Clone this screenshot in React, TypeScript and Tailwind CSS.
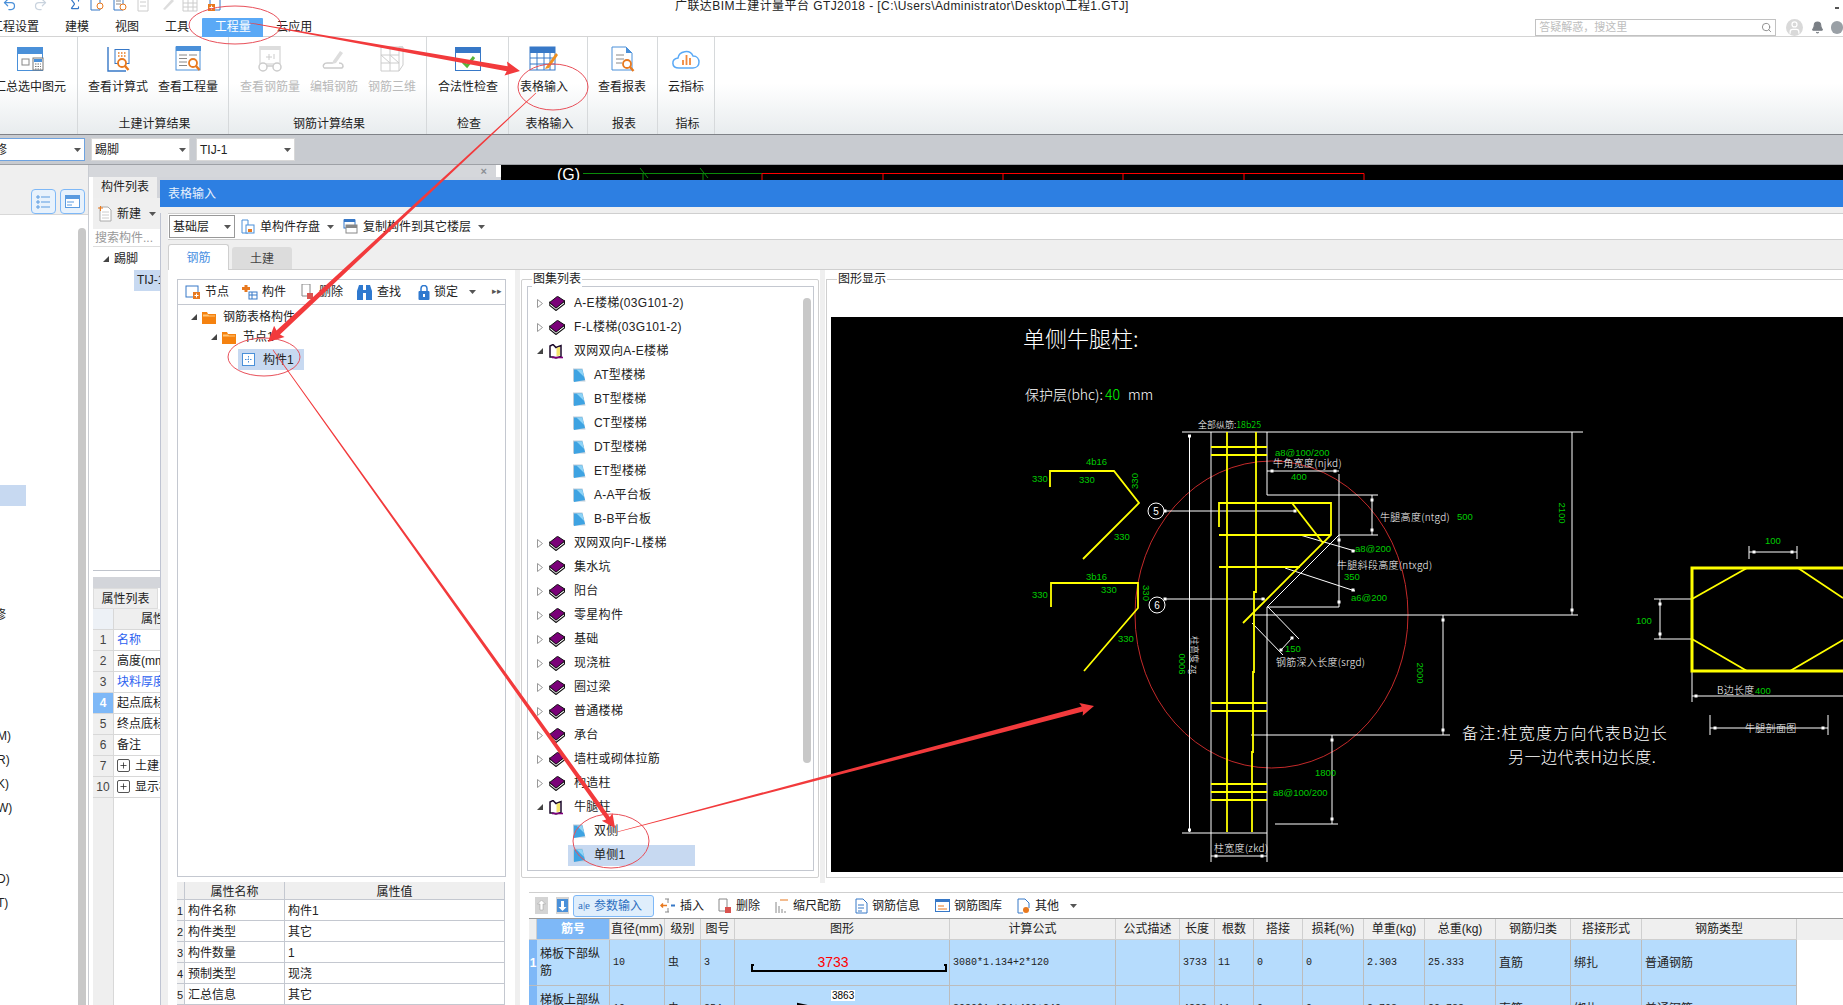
import type { ReactNode } from "react";
import { Undo2, Redo2, Sigma, Search, Bell, User, Plus } from "lucide-react";

const Caret = () => (
  <svg width="7" height="4" viewBox="0 0 7 4" className="shrink-0">
    <path d="M0 0h7L3.5 4z" fill="#555" />
  </svg>
);

const Book = () => (
  <svg width="16" height="15" viewBox="0 0 16 15" className="shrink-0">
    <path d="M.8 6.500v3l6.200 5 8.500-6.500V5L7 11.500z" fill="#fff" stroke="#111" strokeWidth="1.100" />
    <path d="M8.500.3L15.700 5 7 12.200.6 6.500z" fill="#7a0078" stroke="#111" strokeWidth="1" />
  </svg>
);

const OpenBook = () => (
  <svg width="15" height="15" viewBox="0 0 15 15" className="shrink-0">
    <path d="M1 13V2l3-1.500 3 3 5-2v11l-5 1.500-3-1z" fill="#fff" stroke="#1c0a2a" strokeWidth="1.500" />
    <path d="M7.500 4l3.500-1.200v8.500l-3.500 1.200z" fill="#f5e66a" />
    <path d="M3 13.500h11" stroke="#80007c" strokeWidth="1.600" />
  </svg>
);

const Page = () => (
  <svg width="13" height="15" viewBox="0 0 13 15" className="shrink-0">
    <path d="M0 .5h9.500l3 13H0z" fill="#bccbd9" />
    <path d="M1 1.500h8.200l2.800 10.500-11 2z" fill="#3ea3e2" />
    <path d="M3.500 1.500h5.700l2 7.500z" fill="#8ed3f6" />
  </svg>
);

const Folder = () => (
  <svg width="14" height="13" viewBox="0 0 14 13" className="shrink-0">
    <path d="M0 1h5l1 2h8v10H0z" fill="#f5820f" />
    <path d="M1 3.500h5l1 1h6v1H1z" fill="#ffc67a" />
  </svg>
);

const Closed = () => (
  <svg width="6" height="9" viewBox="0 0 6 9" className="shrink-0">
    <path d="M.5.5l5 4-5 4z" fill="#fff" stroke="#999" />
  </svg>
);

const Opened = () => (
  <svg width="6" height="6" viewBox="0 0 6 6" className="shrink-0">
    <path d="M6 0v6H0z" fill="#444" />
  </svg>
);

const Lens = ({ x = 20, y = 18 }: { x?: number; y?: number }) => (
  <g fill="none" stroke="#e8791f">
    <circle cx={x} cy={y} r="4" strokeWidth="1.800" fill="#fff" />
    <path d={`M${x + 3} ${y + 3}l3.500 4`} strokeWidth="2.400" />
  </g>
);

const Ico = ({ children }: { children: ReactNode }) => (
  <svg width="30" height="26" viewBox="0 0 30 26" className="shrink-0">
    {children}
  </svg>
);

const SumIcon = () => (
  <Ico>
    <rect x="2.500" y="1.500" width="25" height="23" fill="#fff" stroke="#4a90d9" />
    <rect x="2" y="1" width="26" height="7" fill="#4a90d9" />
    <rect x="7" y="13" width="7" height="6" fill="none" stroke="#888" />
    <rect x="18" y="12" width="10" height="12" fill="#fff" stroke="#777" />
    <rect x="19" y="13" width="8" height="3" fill="#4a90d9" />
    <path d="M20 18h6M20 20.500h6M20 23h6" stroke="#777" strokeDasharray="1.500 1" />
  </Ico>
);
const CalcIcon = () => (
  <Ico>
    <path d="M5 1v24h18" fill="none" stroke="#3778c7" strokeWidth="1.400" />
    <rect x="12" y="3.500" width="14" height="14" fill="#fff" stroke="#3778c7" />
    <path d="M15 7h1.500M18 7h1.500M21 7h1.500M15 10h1.500M18 10h1.500M21 10h1.500" stroke="#e8791f" strokeWidth="1.500" />
    <Lens x={19} y={17} />
  </Ico>
);
const QtyIcon = () => (
  <Ico>
    <rect x="3" y="1" width="24" height="23" fill="#fff" stroke="#4a90d9" />
    <rect x="3" y="0" width="25" height="5" fill="#4a90d9" />
    <path d="M6 9h8M16 9h8M6 12.500h8M6 16h8M6 19.500h8" stroke="#888" />
    <Lens x={20} y={17} />
  </Ico>
);
const GlassIcon = () => (
  <Ico>
    <rect x="5" y="0" width="20" height="18" fill="#fff" stroke="#ccc" />
    <rect x="5" y="0" width="20" height="4" fill="#ddd" />
    <path d="M14 8v6M11 11h6M19 8v5" stroke="#ccc" />
    <circle cx="8" cy="21" r="4" fill="#fff" stroke="#ccc" strokeWidth="1.500" />
    <circle cx="22" cy="21" r="4" fill="#fff" stroke="#ccc" strokeWidth="1.500" />
    <path d="M12 20h6" stroke="#ccc" strokeWidth="1.500" />
  </Ico>
);
const EditIcon = () => (
  <Ico>
    <path d="M5 22c-2-2 0-5 3-5h6M20 17c4 0 5 3 3 5H5" fill="none" stroke="#ccc" strokeWidth="1.500" />
    <path d="M14 15l7-10 3 2-7 10-4 1z" fill="#ddd" />
  </Ico>
);
const GridIcon = () => (
  <Ico>
    <path d="M4 1v24M13 1v24M22 1v24M4 1l22 0M4 9h18M4 17h18M4 25h18M22 1l4 0v18l-4 6M4 9l9 8M13 9l9 8" fill="none" stroke="#ccc" />
  </Ico>
);
const CheckIcon = () => (
  <Ico>
    <rect x="2.500" y="1.500" width="25" height="23" fill="#fff" stroke="#3778c7" />
    <rect x="2" y="1" width="26" height="6" fill="#3778c7" />
    <path d="M10 16l4 4 7-9" fill="none" stroke="#58b33c" strokeWidth="3" />
  </Ico>
);
const TableIcon = () => (
  <Ico>
    <rect x="1" y="1" width="25" height="23" fill="#fff" stroke="#3778c7" />
    <rect x="1" y="1" width="25" height="6" fill="#3778c7" />
    <path d="M1 12h25M1 18h25M8 7v17M15 7v17M21 7v17" stroke="#3778c7" />
    <path d="M17 21l10-14 2 2-9 13-4 1z" fill="#f09020" />
  </Ico>
);
const ReportIcon = () => (
  <Ico>
    <path d="M5 1h14l6 6v17H5z" fill="#fff" stroke="#4a90d9" />
    <path d="M19 1l6 6h-6z" fill="#4a90d9" />
    <path d="M9 9h8M9 13h8M9 17h6" stroke="#888" />
    <Lens x={20} y={18} />
  </Ico>
);
const CloudIcon = () => (
  <Ico>
    <path d="M8 22c-8 0-8-9-1-10 1-7 12-9 15-2 8 0 8 12 0 12z" fill="#fff" stroke="#5aa9f6" strokeWidth="1.500" />
    <path d="M12 19v-5M15.500 19V9M19 19v-7" stroke="#f0883c" strokeWidth="1.800" />
  </Ico>
);

function RibbonItem({ icon, label, dim }: { icon: ReactNode; label: string; dim?: boolean }) {
  return (
    <div className="flex flex-col items-center shrink-0">
      <div className="h-[26px]">{icon}</div>
      <div className={`mt-[7px] h-4 leading-4 whitespace-nowrap ${dim ? "text-[#b9b9b9]" : ""}`}>{label}</div>
    </div>
  );
}

function RibbonGroup({ className, items, label }: { className: string; items: ReactNode; label?: string }) {
  return (
    <div className={`flex flex-col h-full pt-[9px] overflow-hidden border-r border-[#d6d9db] ${className}`}>
      <div className="flex">{items}</div>
      <div className="mt-auto mb-[2px] pl-[3px] h-4 leading-4 text-center whitespace-nowrap">{label}</div>
    </div>
  );
}

function Combo({ className, text, textClass }: { className: string; text: string; textClass?: string }) {
  return (
    <div className={`flex items-center justify-between bg-white border h-[23px] pl-[3px] pr-[3px] overflow-hidden ${className}`}>
      <span className={`whitespace-nowrap ${textClass ?? ""}`}>{text}</span>
      <Caret />
    </div>
  );
}

const topMenus = [
  ["建模", "ml-[26px]"],
  ["视图", "ml-[26px]"],
  ["工具", "ml-[26px]"],
];

const sideProps: [string, string, string?][] = [
  ["1", "名称", "blue"],
  ["2", "高度(mm)"],
  ["3", "块料厚度(mm)", "blue"],
  ["4", "起点底标高(m)", "on"],
  ["5", "终点底标高(m)"],
  ["6", "备注"],
  ["7", "土建业务属性", "plus"],
  ["10", "显示样式", "plus"],
];

const atlas: [string, "c" | "o" | "p", boolean?][] = [
  ["A-E楼梯(03G101-2)", "c"],
  ["F-L楼梯(03G101-2)", "c"],
  ["双网双向A-E楼梯", "o"],
  ["AT型楼梯", "p"],
  ["BT型楼梯", "p"],
  ["CT型楼梯", "p"],
  ["DT型楼梯", "p"],
  ["ET型楼梯", "p"],
  ["A-A平台板", "p"],
  ["B-B平台板", "p"],
  ["双网双向F-L楼梯", "c"],
  ["集水坑", "c"],
  ["阳台", "c"],
  ["零星构件", "c"],
  ["基础", "c"],
  ["现浇桩", "c"],
  ["圈过梁", "c"],
  ["普通楼梯", "c"],
  ["承台", "c"],
  ["墙柱或砌体拉筋", "c"],
  ["构造柱", "c"],
  ["牛腿柱", "o"],
  ["双侧", "p"],
  ["单侧1", "p", true],
];

const nodeProps = [
  ["1", "构件名称", "构件1"],
  ["2", "构件类型", "其它"],
  ["3", "构件数量", "1"],
  ["4", "预制类型", "现浇"],
  ["5", "汇总信息", "其它"],
];

const rebarCols = "grid grid-cols-[8px_73px_55px_36px_34px_215px_166px_64px_35px_39px_49px_61px_61px_71px_75px_71px_155px]";
const rebarHead = ["", "筋号", "直径(mm)", "级别", "图号", "图形", "计算公式", "公式描述", "长度", "根数", "搭接", "损耗(%)", "单重(kg)", "总重(kg)", "钢筋归类", "搭接形式", "钢筋类型"];

const monoCell = "px-[3px] flex items-center border-r border-b border-[#bcbcbc] [font-family:'Liberation_Mono','Noto_Sans_CJK_SC',monospace] text-[10px]";
const textCell = "px-[3px] flex items-center border-r border-b border-[#bcbcbc]";

function RebarRow({ num, name, vals, fig, calc }: { num?: string; name: string; vals: string[]; fig: ReactNode; calc: string }) {
  return (
    <div className={`${rebarCols} h-[46px] w-[1268px] bg-[#b6dcfd]`}>
      <div className="flex items-center justify-center bg-[#7eb8f7] text-white font-bold border-b border-[#bcbcbc]">{num}</div>
      <div className={`${textCell} leading-[17px]`}>{name}</div>
      <div className={monoCell}>{vals[0]}</div>
      <div className={textCell + " text-[11px]"}>虫</div>
      <div className={monoCell}>{vals[1]}</div>
      <div className="border-r border-b border-[#bcbcbc] relative overflow-hidden">{fig}</div>
      <div className={monoCell}>{calc}</div>
      <div className={monoCell}></div>
      <div className={monoCell}>{vals[2]}</div>
      <div className={monoCell}>11</div>
      <div className={monoCell}>0</div>
      <div className={monoCell}>0</div>
      <div className={monoCell}>{vals[3]}</div>
      <div className={monoCell}>{vals[4]}</div>
      <div className={textCell}>直筋</div>
      <div className={textCell}>绑扎</div>
      <div className={textCell}>普通钢筋</div>
    </div>
  );
}

function PanelTool({ icon, label, caret }: { icon: ReactNode; label: string; caret?: boolean }) {
  return (
    <div className="flex items-center gap-[4px] shrink-0 whitespace-nowrap">
      {icon}
      <span>{label}</span>
      {caret && <div className="ml-[7px]"><Caret /></div>}
    </div>
  );
}

const W: [number, number, number, number][] = [
  [1182, 432, 1583, 432], [1189.5, 435, 1189.5, 832], [1211, 432, 1211, 862], [1267, 432, 1267, 495],
  [1267, 607, 1267, 862], [1267, 495, 1378, 495], [1339, 535, 1378, 535], [1339, 474, 1339, 607],
  [1267, 471, 1339, 471], [1267, 607, 1339, 607], [1267, 607, 1339, 535], [1253, 615, 1578, 615],
  [1572, 432, 1572, 615], [1443, 615, 1443, 735], [1251, 735, 1450, 735], [1332, 735, 1332, 824],
  [1275, 824, 1338, 824], [1182, 833, 1267, 833], [1211, 856, 1267, 856], [1372, 495, 1372, 535],
  [1165, 511, 1295, 511], [1165, 599, 1265, 599], [1300, 535, 1355, 551], [1285, 568, 1355, 591],
  [1268, 607, 1299, 639], [1252, 623, 1283, 655], [1292, 638, 1281, 650],
  [1749, 552, 1797, 552], [1749, 546, 1749, 559], [1797, 546, 1797, 559], [1660, 599, 1660, 639],
  [1654, 599, 1692, 599], [1654, 639, 1692, 639], [1692, 671, 1692, 702], [1692, 696, 1843, 696],
  [1710, 728, 1828, 728], [1710, 715, 1710, 735], [1828, 715, 1828, 735],
];

const Y: string[] = [
  "1050,487 1050,471 1114,471 1139,503 1083,559",
  "1051,607 1051,583 1138,583 1138,608 1084,671",
  "1227,432 1227,832",
  "1256,432 1256,592 1254,592 1254,672 1253,672 1253,752 1252,752 1252,832",
  "1211,447 1267,447", "1211,455 1267,455", "1211,703 1267,703", "1211,711 1267,711",
  "1211,784 1267,784", "1211,792 1267,792", "1211,800 1267,800",
  "1219,527 1219,503 1331,503 1331,535 1243,623", "1292,503 1323,543",
  "1219,535 1331,535", "1219,567 1300,567",
  "1747,568 1692,599", "1692,639 1747,671", "1798,568 1843,598", "1790,671 1843,640",
];

const marks: [number, number][] = [
  [1189.5, 436], [1189.5, 830], [1272, 471], [1335, 471], [1339, 540], [1339, 602], [1372, 500], [1372, 530],
  [1165, 511], [1295, 511], [1165, 599], [1263, 599], [1443, 620], [1443, 730], [1332, 740], [1332, 819],
  [1572, 610], [1216, 856], [1262, 856], [1754, 552], [1792, 552], [1660, 604], [1660, 634], [1696, 696],
  [1715, 728], [1823, 728], [1353, 551], [1353, 590], [1292, 638], [1281, 650],
];

const whiteLabels: [string, number, number][] = [
  ["牛角宽度(njkd)", 1273, 467],
  ["牛腿高度(ntgd)", 1380, 521],
  ["牛腿斜段高度(ntxgd)", 1337, 569],
  ["钢筋深入长度(srgd)", 1276, 666],
  ["柱宽度(zkd)", 1214, 852],
  ["B边长度", 1717, 694],
  ["牛腿剖面图", 1745, 732],
];

const greenLabels: [string, number, number][] = [
  ["4b16", 1086, 465], ["330", 1032, 482], ["330", 1079, 483], ["330", 1114, 540],
  ["3b16", 1086, 580], ["330", 1032, 598], ["330", 1101, 593], ["330", 1118, 642],
  ["a8@100/200", 1275, 456], ["400", 1291, 480], ["500", 1457, 520], ["a8@200", 1355, 552],
  ["350", 1344, 580], ["a6@200", 1351, 601], ["150", 1285, 652], ["1800", 1315, 776],
  ["a8@100/200", 1273, 796], ["100", 1765, 544], ["100", 1636, 624], ["400", 1755, 694],
];

const rotated: [string, number, number, number][] = [
  ["330", 1135, 481, -90], ["330", 1146, 593, 90], ["2100", 1562, 513, 90], ["2000", 1420, 673, 90], ["9000", 1182, 664, -90],
];

function CadDrawing() {
  return (
    <svg width="1012" height="555" viewBox="831 317 1012 555" className="block bg-black">
      <g fontFamily="'Noto Sans CJK SC',sans-serif" fill="#fff">
        <text x="1023" y="347" fontSize="22" fontWeight="300">单侧牛腿柱:</text>
        <text x="1025" y="400" fontSize="14" fontWeight="300">
          保护层(bhc):<tspan fill="#0f0" dx="2">40</tspan>
          <tspan dx="8">mm</tspan>
        </text>
        <text x="1462" y="739" fontSize="16" fontWeight="300" letterSpacing="1.200">备注:柱宽度方向代表B边长</text>
        <text x="1508" y="763" fontSize="16" fontWeight="300" letterSpacing="0.500">另一边代表H边长度.</text>
        <text x="1198" y="428" fontSize="9" fontWeight="300">全部纵筋:<tspan fill="#0f0">18b25</tspan></text>
        <text x="1187" y="620" fontSize="9" fontWeight="300" transform="rotate(90 1181 630)">柱高度 zg</text>
      </g>
      <ellipse cx="1271.500" cy="614.500" rx="136.500" ry="153.500" fill="none" stroke="#c42a2a" strokeWidth="1" />
      {W.map(([a, b, c, d], i) => (
        <line key={i} x1={a} y1={b} x2={c} y2={d} stroke="#fff" strokeWidth="1" />
      ))}
      {marks.map(([a, b], i) => (
        <rect key={i} x={a - 1.5} y={b - 1.5} width="3" height="3" fill="#fff" />
      ))}
      <g fill="none" stroke="#ff0" strokeWidth="1.800">
        {Y.map((p, i) => (
          <polyline key={i} points={p} />
        ))}
      </g>
      <rect x="1692" y="568" width="160" height="103" fill="none" stroke="#ff0" strokeWidth="3" />
      <g fill="#000" stroke="#fff">
        <circle cx="1156" cy="511" r="8" />
        <circle cx="1157" cy="605" r="8" />
      </g>
      <g fontFamily="'Liberation Sans',sans-serif" fontSize="10" fill="#fff" textAnchor="middle">
        <text x="1156" y="515">5</text>
        <text x="1157" y="609">6</text>
      </g>
      <g fontFamily="'Noto Sans CJK SC',sans-serif" fontSize="10" fontWeight="300" letterSpacing="0.300" fill="#fff">
        {whiteLabels.map(([t, x, y]) => (
          <text key={t} x={x} y={y}>{t}</text>
        ))}
      </g>
      <g fontFamily="'Liberation Sans',sans-serif" fontSize="9.500" fill="#0c0">
        {greenLabels.map(([t, x, y], i) => (
          <text key={i} x={x} y={y}>{t}</text>
        ))}
        {rotated.map(([t, x, y, r], i) => (
          <text key={i} x={x} y={y} textAnchor="middle" dominantBaseline="middle" transform={`rotate(${r} ${x} ${y})`}>{t}</text>
        ))}
      </g>
    </svg>
  );
}

function Taper({ x1, y1, x2, y2, w, head }: { x1: number; y1: number; x2: number; y2: number; w: number; head: number }) {
  const len = Math.hypot(x2 - x1, y2 - y1);
  const ux = (x2 - x1) / len;
  const uy = (y2 - y1) / len;
  const nx = -uy;
  const ny = ux;
  const bx = x2 - ux * head;
  const by = y2 - uy * head;
  const pts = [
    [x1 + nx * 0.3, y1 + ny * 0.3],
    [bx + nx * w, by + ny * w],
    [bx - ux * 1.5 + nx * head * 0.55, by - uy * 1.5 + ny * head * 0.55],
    [x2, y2],
    [bx - ux * 1.5 - nx * head * 0.55, by - uy * 1.5 - ny * head * 0.55],
    [bx - nx * w, by - ny * w],
    [x1 - nx * 0.3, y1 - ny * 0.3],
  ];
  return <polygon points={pts.map((p) => p.join(",")).join(" ")} fill="#f23a3c" />;
}

function Annotations() {
  return (
    <svg viewBox="0 0 1843 1005" className="absolute inset-0 w-[1843px] h-[1005px] pointer-events-none">
      <g fill="none" stroke="#e8505a" strokeWidth="1">
        <ellipse cx="235" cy="25" rx="46" ry="19" />
        <ellipse cx="553" cy="87" rx="35" ry="23" />
        <ellipse cx="264" cy="357" rx="36" ry="19" />
        <ellipse cx="611" cy="841" rx="38" ry="27" />
      </g>
      <Taper x1={250} y1={23} x2={520} y2={71} w={2.6} head={13} />
      <Taper x1={536} y1={93} x2={268} y2={342} w={2.6} head={14} />
      <Taper x1={273} y1={350} x2={615} y2={828} w={2.2} head={12} />
      <Taper x1={617} y1={832} x2={1094} y2={706} w={2.6} head={12} />
    </svg>
  );
}

export default function App() {
  return (
    <div className="relative flex flex-col w-[1843px] h-[1005px] overflow-hidden bg-white text-[12px] text-[#222] [font-family:'Liberation_Sans','Noto_Sans_CJK_SC',sans-serif]">
      {/* title bar */}
      <div className="flex h-[18px] shrink-0 overflow-hidden">
        <div className="flex items-start w-[675px] -mt-[3px] pl-[2px] shrink-0">
          <Undo2 size={15} className="text-[#4a90d9]" />
          <Redo2 size={15} className="text-[#c9d3de] ml-[16px]" />
          <Sigma size={14} className="text-[#3778c7] ml-[20px]" />
          <svg width="16" height="15" viewBox="0 0 16 15" className="ml-[7px]"><path d="M2 0h9v13H2z" fill="#fff" stroke="#3778c7" /><circle cx="11" cy="9" r="3" fill="#fff" stroke="#e8791f" /></svg>
          <svg width="16" height="15" viewBox="0 0 16 15" className="ml-[7px]"><path d="M2 0h9v13H2z" fill="#fff" stroke="#3778c7" /><path d="M4 4h5M4 7h5" stroke="#888" /><circle cx="11" cy="10" r="3" fill="#fff" stroke="#e8791f" /></svg>
          <svg width="16" height="15" viewBox="0 0 16 15" className="ml-[8px]"><path d="M2 0h10v14H2z" fill="#fff" stroke="#ccc" /><path d="M4 5h6M4 9h6" stroke="#ccc" /></svg>
          <svg width="14" height="15" viewBox="0 0 14 15" className="ml-[9px]"><path d="M2 12L11 2l2 2-9 9z" fill="#ddd" /></svg>
          <svg width="16" height="15" viewBox="0 0 16 15" className="ml-[7px]"><path d="M1 1h14v13H1zM1 6h14M1 10h14M6 1v13M11 1v13" fill="none" stroke="#ccc" /></svg>
          <svg width="16" height="15" viewBox="0 0 16 15" className="ml-[9px]"><path d="M3 0h10v13H3z" fill="#fff" stroke="#3778c7" /><rect x="1" y="7" width="7" height="7" fill="#e8791f" /><path d="M4.500 8.500v4M2.500 10.500h4" stroke="#fff" /></svg>
        </div>
        <div className="whitespace-nowrap leading-[13px] text-[12px] tracking-[0.42px]">广联达BIM土建计量平台 GTJ2018 - [C:\Users\Administrator\Desktop\工程1.GTJ]</div>
        <div className="ml-auto mr-[4px] mt-[7px] w-[4px] h-[2px] bg-[#555]" />
      </div>

      {/* menu row */}
      <div className="flex items-center h-[19px] shrink-0 border-b border-[#d4d4d4]">
        <span className="-ml-[9px] whitespace-nowrap">工程设置</span>
        {topMenus.map(([t, c]) => (
          <span key={t} className={`${c} whitespace-nowrap`}>{t}</span>
        ))}
        <div className="ml-[13px] w-[62px] h-[19px] leading-[18px] text-center bg-[#5aa9f6] text-white rounded-t-[1px]">工程量</div>
        <span className="ml-[13px] whitespace-nowrap">云应用</span>
        <div className="ml-[1223px] flex items-center justify-between w-[244px] h-[17px] border border-[#c2c2c2] px-[3px] text-[11px] text-[#bdbdbd]">
          <span>答疑解惑，搜这里</span>
          <Search size={11} className="text-[#888]" />
        </div>
        <div className="ml-[10px] w-[17px] h-[17px] rounded-full bg-[#d9d9d9] flex items-center justify-center overflow-hidden shrink-0">
          <User size={15} className="text-white" />
        </div>
        <Bell size={13} className="ml-[8px] shrink-0 text-[#7a7f85] fill-[#7a7f85]" />
        <div className="ml-[7px] w-[12px] h-[13px] rounded-full bg-[#9aa0a6] shrink-0" />
      </div>

      {/* ribbon */}
      <div className="flex h-[98px] shrink-0 border-b border-[#7f8287] bg-[linear-gradient(to_bottom,#fff_48%,#e8ecee_100%)]">
        <RibbonGroup className="w-[78px]" items={<div className="-ml-[6px] w-[72px]"><RibbonItem icon={<SumIcon />} label="汇总选中图元" /></div>} />
        <RibbonGroup className="w-[151px]" label="土建计算结果" items={<div className="flex gap-[10px] pl-[10px]"><RibbonItem icon={<CalcIcon />} label="查看计算式" /><RibbonItem icon={<QtyIcon />} label="查看工程量" /></div>} />
        <RibbonGroup className="w-[198px]" label="钢筋计算结果" items={<div className="flex gap-[10px] pl-[11px]"><RibbonItem dim icon={<GlassIcon />} label="查看钢筋量" /><RibbonItem dim icon={<EditIcon />} label="编辑钢筋" /><RibbonItem dim icon={<GridIcon />} label="钢筋三维" /></div>} />
        <RibbonGroup className="w-[82px]" label="检查" items={<div className="pl-[11px]"><RibbonItem icon={<CheckIcon />} label="合法性检查" /></div>} />
        <RibbonGroup className="w-[79px]" label="表格输入" items={<div className="pl-[11px]"><RibbonItem icon={<TableIcon />} label="表格输入" /></div>} />
        <RibbonGroup className="w-[70px]" label="报表" items={<div className="pl-[10px]"><RibbonItem icon={<ReportIcon />} label="查看报表" /></div>} />
        <RibbonGroup className="w-[57px]" label="指标" items={<div className="pl-[10px]"><RibbonItem icon={<CloudIcon />} label="云指标" /></div>} />
      </div>

      {/* selector bar */}
      <div className="flex items-center h-[30px] shrink-0 bg-[#c8cbd0] border-b border-[#9ea1a6]">
        <Combo className="w-[86px] -ml-[1px] border-[#6ea3e0]" text="修" textClass="-ml-[8px]" />
        <Combo className="w-[99px] ml-[6px] border-[#d8d8d8]" text="踢脚" />
        <Combo className="w-[99px] ml-[6px] border-[#d8d8d8]" text="TIJ-1" />
      </div>

      <div className="flex flex-1 min-h-0">
        {/* far left panel */}
        <div className="flex flex-col w-[89px] shrink-0 border-r border-[#c9ccd2]">
          <div className="flex gap-[4px] h-[50px] shrink-0 pt-[24px] pl-[31px] bg-[#efefef] border-b border-[#d8d8d8]">
            <div className="flex items-center justify-center w-[25px] h-[25px] rounded-[4px] border border-[#7eb8f7] bg-[#e8f2fc]">
              <svg width="15" height="15" viewBox="0 0 15 15"><path d="M1 2h2v2H1zM1 7h2v2H1zM1 12h2v2H1z" fill="none" stroke="#5a9be0" /><path d="M5 3h9M5 8h9M5 13h9" stroke="#5a9be0" /></svg>
            </div>
            <div className="flex items-center justify-center w-[25px] h-[25px] rounded-[4px] border border-[#7eb8f7] bg-[#e8f2fc]">
              <svg width="15" height="15" viewBox="0 0 15 15"><rect x=".5" y="1.500" width="14" height="12" fill="#fff" stroke="#5a9be0" /><rect x="0" y="1" width="15" height="4" fill="#5a9be0" /><path d="M2 8h7M2 11h5" stroke="#5a9be0" /></svg>
            </div>
          </div>
          <div className="flex flex-1 min-h-0">
            <div className="w-[78px] shrink-0 overflow-hidden">
              <div className="mt-[270px] w-[26px] h-[21px] bg-[#c7d9f1]" />
              <div className="mt-[101px] h-4 leading-4 -ml-[6px]">修</div>
              <div className="mt-[101px] h-6 leading-6 -ml-[3px]">M)</div>
              <div className="h-6 leading-6 -ml-[3px]">R)</div>
              <div className="h-6 leading-6 -ml-[3px]">K)</div>
              <div className="h-6 leading-6 -ml-[3px]">W)</div>
              <div className="mt-[47px] h-6 leading-6 -ml-[3px]">D)</div>
              <div className="h-6 leading-6 -ml-[3px]">T)</div>
            </div>
            <div className="mt-[13px] w-[8px] h-[900px] bg-[#c8c8c8] rounded-t" />
          </div>
        </div>

        {/* component and property lists, mostly behind the dialog */}
        <div className="flex flex-col w-[412px] shrink-0 pl-[4px]">
          <div className="flex items-center justify-end h-[12px] shrink-0 pr-[9px] bg-[#d5d7db] text-[#8b8e93] -ml-[4px] w-[407px] text-[11px] font-bold leading-none">×</div>
          <div className="flex h-[21px] shrink-0 bg-[#d3d5da]">
            <div className="w-[64px] bg-[#eee] text-center leading-[21px]">构件列表</div>
          </div>
          <div className="flex items-center h-[31px] shrink-0 bg-[#efefef] pl-[5px] gap-[5px]">
            <svg width="14" height="16" viewBox="0 0 14 16"><path d="M2 1h8l3 3v11H2z" fill="#fff" stroke="#aaa" /><path d="M4 6h7M4 9h7M4 12h7" stroke="#ccc" /><path d="M0 2h5M2.500 0v5" stroke="#e8791f" /></svg>
            <span>新建</span>
            <div className="ml-[3px]"><Caret /></div>
          </div>
          <div className="h-[18px] shrink-0 pl-[2px] text-[#999] leading-[18px] border-b border-[#ddd]">搜索构件...</div>
          <div className="flex items-center h-[22px] pl-[10px] gap-[5px] mt-[1px]">
            <Opened />
            <span>踢脚</span>
          </div>
          <div className="ml-[41px] h-[21px] leading-[21px] pl-[3px] bg-[#c7d9f1] w-[100px]">TIJ-1</div>
          <div className="h-[280px] shrink-0 border-b border-[#c0c4cc]" />
          <div className="h-[6px] shrink-0" />
          <div className="h-[11px] shrink-0 bg-[#d3d5da]" />
          <div className="h-[21px] shrink-0 w-[65px] bg-[#eee] text-center leading-[21px] border border-[#ddd]">属性列表</div>
          <div className="flex h-[21px] shrink-0 border-b border-[#d8d8d8]">
            <div className="w-[21px] bg-[#edf1f6] border-r border-[#d8d8d8]" />
            <div className="flex-1 bg-[#efefef] pl-[27px] leading-[21px]">属性</div>
          </div>
          {sideProps.map(([n, t, k]) => (
            <div key={n} className="flex h-[21px] shrink-0 border-b border-[#d8d8d8] leading-[21px]">
              <div className={`w-[21px] text-center border-r border-[#d8d8d8] ${k === "on" ? "bg-[#7eb8f7] text-white font-bold" : "bg-[#efefef] text-[#444]"}`}>{n}</div>
              {k === "plus" && (
                <div className="flex items-center justify-center w-[13px] h-[13px] ml-[3px] mt-[3px] mr-[5px] border border-[#555] rounded-[2px]">
                  <Plus size={9} strokeWidth={2} />
                </div>
              )}
              <div className={`whitespace-nowrap ${k === "plus" ? "" : "pl-[3px]"} ${k === "blue" ? "text-[#2d62f0]" : ""}`}>{t}</div>
            </div>
          ))}
          <div className="flex-1 w-[21px] bg-[#efefef] border-r border-[#d8d8d8]" />
        </div>

        {/* cad view behind the dialog */}
        <div className="flex-1 bg-black h-[16px]">
          <svg width="1342" height="16" viewBox="501 164 1342 16" className="block">
            <text x="557" y="179" fontFamily="'Liberation Sans',sans-serif" fontSize="16" fill="#fff">(G)</text>
            <path d="M583 172.500H762M640 167l8 10M700 167l8 10M643 172v8M703 172v8" stroke="#0a8a0a" fill="none" />
            <path d="M762 180v-7.500H1364V180M883 172v8M1003 172v8M1123 172v8M1244 172v8" stroke="#f00" fill="none" />
          </svg>
        </div>
      </div>

      {/* dialog window */}
      <div className="absolute left-[160px] top-[180px] right-0 bottom-0 flex flex-col bg-white">
        <div className="h-[27px] shrink-0 bg-[#2d7fe2] pl-[8px] leading-[29px] text-[#e8f1fc]">表格输入</div>
        <div className="h-[6px] shrink-0 bg-[#efefef]" />
        <div className="flex flex-1 min-h-0">
          <div className="w-[8px] shrink-0 bg-[#efefef] border-l border-[#bfc4d2]" />
          <div className="flex flex-col flex-1 min-w-0">
            {/* dialog toolbar */}
            <div className="flex items-center h-[27px] shrink-0 border-y border-[#cfcfcf]">
              <Combo className="w-[66px] ml-[1px] border-[#999] h-[23px]" text="基础层" />
              <div className="ml-[6px]">
                <PanelTool
                  icon={<svg width="15" height="15" viewBox="0 0 15 15"><path d="M1 1h6v13H1z" fill="#fff" stroke="#4a90d9" /><rect x="5" y="6" width="8" height="8" fill="#fff" stroke="#4a90d9" /><rect x="7" y="10" width="4" height="3" fill="#e8791f" /></svg>}
                  label="单构件存盘"
                />
              </div>
              <div className="ml-[7px]"><Caret /></div>
              <div className="ml-[9px]">
                <PanelTool
                  icon={<svg width="16" height="15" viewBox="0 0 16 15"><rect x="1" y="1" width="11" height="8" fill="#fff" stroke="#3778c7" /><rect x="1" y="0" width="11" height="3" fill="#3778c7" /><rect x="3" y="6" width="11" height="8" fill="#fff" stroke="#888" /><rect x="3" y="6" width="11" height="3" fill="#888" /></svg>}
                  label="复制构件到其它楼层"
                />
              </div>
              <div className="ml-[7px]"><Caret /></div>
            </div>
            {/* tabs */}
            <div className="flex items-end h-[30px] shrink-0 bg-[#efefef] border-b border-[#cfcfcf]">
              <div className="w-[61px] h-[26px] -mb-[1px] bg-white border-x border-t border-[#cfcfcf] rounded-t-[3px] text-center leading-[27px] text-[#4a90e2]">钢筋</div>
              <div className="w-[60px] h-[22px] ml-[3px] bg-[#dcdcdc] rounded-t-[3px] text-center leading-[24px] text-[#444]">土建</div>
            </div>

            <div className="flex flex-1 min-h-0">
              {/* node tree */}
              <div className="flex flex-col w-[347px] shrink-0 pl-[9px] pt-[9px]">
                <div className="flex flex-col w-[329px] h-[598px] shrink-0 border border-[#c4c8d0]">
                  <div className="flex items-center h-[25px] shrink-0 border-b border-[#c4c8d0] pl-[7px] gap-[13px]">
                    <PanelTool icon={<svg width="16" height="15" viewBox="0 0 16 15"><rect x="1" y="1" width="12" height="11" fill="#fff" stroke="#3778c7" /><rect x="8" y="7" width="7" height="7" fill="#e8791f" /><path d="M11.500 8.500v4M9.500 10.500h4" stroke="#fff" /></svg>} label="节点" />
                    <PanelTool icon={<svg width="16" height="15" viewBox="0 0 16 15"><path d="M4 0v7M0 3.500h8" stroke="#e8791f" strokeWidth="3" /><rect x="7" y="7" width="8" height="7" fill="#fff" stroke="#3778c7" /><path d="M7 10h8M10 7v7" stroke="#3778c7" /></svg>} label="构件" />
                    <PanelTool icon={<svg width="16" height="16" viewBox="0 0 16 16"><path d="M3 0h8v12H3z" fill="#fff" stroke="#888" /><rect x="8" y="9" width="6" height="6" fill="#d9534f" /></svg>} label="删除" />
                    <PanelTool icon={<svg width="17" height="15" viewBox="0 0 17 15"><path d="M3 0h4v15H1V6zM10 0h4l2 6v9h-6z" fill="#2f79cf" /><rect x="7" y="5" width="3" height="3" fill="#2f79cf" /></svg>} label="查找" />
                    <div className="ml-[4px]">
                      <PanelTool icon={<svg width="12" height="15" viewBox="0 0 12 15"><path d="M3 6V3.500a3 3 0 016 0V6" fill="none" stroke="#2f79cf" strokeWidth="1.500" /><rect x="0.500" y="6" width="11" height="9" rx="1" fill="#2f79cf" /><rect x="5" y="9" width="2" height="3" fill="#fff" /></svg>} label="锁定" caret />
                    </div>
                    <span className="ml-auto mr-[3px] text-[9px] text-[#555]">▸▸</span>
                  </div>
                  <div className="flex items-center h-[20px] mt-[2px] pl-[13px] gap-[5px]">
                    <Opened />
                    <Folder />
                    <span className="ml-[2px]">钢筋表格构件</span>
                  </div>
                  <div className="flex items-center h-[20px] pl-[33px] gap-[5px]">
                    <Opened />
                    <Folder />
                    <span className="ml-[2px]">节点1</span>
                  </div>
                  <div className="flex items-center ml-[60px] mt-[2px] w-[66px] h-[21px] pl-[4px] bg-[#c7d9f1]">
                    <svg width="13" height="13" viewBox="0 0 13 13"><rect x=".5" y=".5" width="12" height="12" fill="#fff" stroke="#4a90d9" /><path d="M6.500 3v7M3 6.500h7" stroke="#4a90d9" strokeDasharray="1.500 1" /></svg>
                    <span className="ml-[8px]">构件1</span>
                  </div>
                </div>
                <div className="grid grid-cols-[8px_100px_220px] w-[329px] mt-[5px]">
                  <div className="h-[18px] bg-[#efefef] border-b border-r border-[#c4c8d0]" />
                  <div className="h-[18px] bg-[#efefef] border-b border-r border-[#c4c8d0] text-center leading-[21px]">属性名称</div>
                  <div className="h-[18px] bg-[#efefef] border-b border-r border-[#c4c8d0] text-center leading-[21px]">属性值</div>
                  {nodeProps.map(([n, k, v]) => [
                    <div key={n + "n"} className="h-[21px] pt-[2px] leading-[19px] bg-[#f4f4f4] border-b border-r border-[#c4c8d0] text-[11px]">{n}</div>,
                    <div key={n + "k"} className="h-[21px] pt-[2px] leading-[19px] pl-[3px] border-b border-r border-[#c4c8d0]">{k}</div>,
                    <div key={n + "v"} className="h-[21px] pt-[2px] leading-[19px] pl-[3px] border-b border-r border-[#c4c8d0]">{v}</div>,
                  ])}
                </div>
              </div>
              <div className="w-[5px] shrink-0 bg-[#efefef]" />

              <div className="flex flex-col flex-1 min-w-0">
                <div className="flex h-[613px] shrink-0">
                  {/* atlas list */}
                  <div className="w-[300px] shrink-0 pt-[9px] pl-[1px]">
                    <div className="relative w-[298px] h-[599px] border border-[#cfcfcf] rounded-[2px] pl-[5px] pt-[6px]">
                      <div className="absolute -top-[9px] left-[10px] px-[1px] bg-white leading-4 h-4">图集列表</div>
                      <div className="flex w-[287px] h-[585px] border border-[#c4c8d0] pt-[4px] overflow-hidden">
                        <div className="flex-1 min-w-0">
                          {atlas.map(([t, k, sel]) => (
                            <div key={t} className="flex items-center h-[24px] whitespace-nowrap">
                              {k === "p" ? (
                                <div className={`flex items-center h-[21px] pl-[5px] ml-[40px] w-[127px] ${sel ? "bg-[#c7d9f1]" : ""}`}>
                                  <Page />
                                  <span className="ml-[8px] tracking-[0.2px]">{t}</span>
                                </div>
                              ) : (
                                <>
                                  <div className="flex items-center justify-center w-[6px] ml-[9px]">{k === "c" ? <Closed /> : <Opened />}</div>
                                  <div className="flex items-center justify-center w-[17px] ml-[5px]">{k === "c" ? <Book /> : <OpenBook />}</div>
                                  <span className="ml-[9px] tracking-[0.3px]">{t}</span>
                                </>
                              )}
                            </div>
                          ))}
                        </div>
                        <div className="mt-[7px] mr-[2px] w-[8px] h-[465px] bg-[#c8c8c8] rounded-full" />
                      </div>
                    </div>
                  </div>
                  <div className="w-[5px] shrink-0 bg-[#efefef]" />
                  {/* drawing preview */}
                  <div className="flex-1 min-w-0 pt-[9px] pl-[1px]">
                    <div className="relative h-[599px] border-l border-y border-[#cfcfcf] pl-[4px] pt-[37px]">
                      <div className="absolute -top-[9px] left-[10px] px-[1px] bg-white leading-4 h-4">图形显示</div>
                      <CadDrawing />
                    </div>
                  </div>
                </div>

                {/* rebar table */}
                <div className="flex-1 min-h-0 bg-[#efefef]">
                  <div className="h-full bg-white pt-[9px] pl-[9px]">
                    <div className="flex items-center h-[26px] border-t border-[#cfcfcf] pl-[6px] whitespace-nowrap">
                      <svg width="13" height="17" viewBox="0 0 13 17" className="shrink-0"><rect width="13" height="17" fill="#d4d4d4" /><path d="M6.500 3l4 4H8v6H5V7H2.500z" fill="#fff" stroke="#999" strokeWidth=".5" /></svg>
                      <svg width="13" height="17" viewBox="0 0 13 17" className="shrink-0 ml-[8px]"><rect width="13" height="17" fill="#d4d4d4" /><rect x="1" y="2" width="11" height="13" fill="#4a90d9" /><path d="M6.500 14l-4-4H5V4h3v6h2.500z" fill="#fff" /></svg>
                      <div className="flex items-center w-[81px] h-[22px] ml-[4px] pl-[4px] gap-[4px] rounded-[3px] bg-[#dfeefc] border border-[#7eb8f7] text-[#2d6fbf]">
                        <span className="text-[11px] [font-family:'Liberation_Serif',serif]">a|e</span>
                        <span>参数输入</span>
                      </div>
                      <div className="ml-[6px]">
                        <PanelTool icon={<svg width="16" height="15" viewBox="0 0 16 15"><path d="M5 1h4M5 14h4M8 1v4M8 10v4" stroke="#888" /><path d="M7 7.500H1m2-2L1 7.500l2 2" fill="none" stroke="#e8791f" strokeWidth="1.500" /><path d="M11 7.500h4" stroke="#3778c7" strokeWidth="2" /></svg>} label="插入" />
                      </div>
                      <div className="ml-[14px]">
                        <PanelTool icon={<svg width="14" height="16" viewBox="0 0 14 16"><path d="M1 1h8v12H1z" fill="#fff" stroke="#888" /><rect x="7" y="9" width="6" height="6" fill="#d9534f" /></svg>} label="删除" />
                      </div>
                      <div className="ml-[15px]">
                        <PanelTool icon={<svg width="14" height="16" viewBox="0 0 14 16"><path d="M1 4v11M4 8v7M7 11v4M10 13v2" stroke="#888" /><path d="M5 2h8" stroke="#e8791f" /></svg>} label="缩尺配筋" />
                      </div>
                      <div className="ml-[14px]">
                        <PanelTool icon={<svg width="13" height="16" viewBox="0 0 13 16"><path d="M1 1h7l4 4v10H1z" fill="#fff" stroke="#3778c7" /><path d="M3 7h6M3 10h6M3 13h4" stroke="#3778c7" /></svg>} label="钢筋信息" />
                      </div>
                      <div className="ml-[15px]">
                        <PanelTool icon={<svg width="15" height="13" viewBox="0 0 15 13"><rect x=".5" y=".5" width="14" height="12" fill="#fff" stroke="#3778c7" /><rect x="0" y="0" width="15" height="3" fill="#3778c7" /><path d="M3 7h6M3 10h9" stroke="#e8791f" /></svg>} label="钢筋图库" />
                      </div>
                      <div className="ml-[14px]">
                        <PanelTool icon={<svg width="15" height="16" viewBox="0 0 15 16"><path d="M2 1h7l4 4v5M2 1v14h5" fill="#fff" stroke="#3778c7" /><circle cx="10" cy="12" r="3" fill="#e8791f" /></svg>} label="其他" caret />
                      </div>
                    </div>
                    <div className="border-t border-[#9a9a9a]">
                      <div className="bg-[#efefef]">
                        <div className={`${rebarCols} h-[21px] w-[1268px]`}>
                          {rebarHead.map((h, i) => (
                            <div key={i} className={`flex items-center justify-center h-[21px] border-r border-b border-[#cfcfcf] whitespace-nowrap ${i === 1 ? "bg-[#7eb8f7] text-white font-bold" : ""}`}>{h}</div>
                          ))}
                        </div>
                      </div>
                      <RebarRow
                        num="1"
                        name="梯板下部纵筋"
                        vals={["10", "3", "3733", "2.303", "25.333"]}
                        calc="3080*1.134+2*120"
                        fig={
                          <svg width="215" height="46" viewBox="0 0 215 46" className="block">
                            <text x="98" y="27" textAnchor="middle" fontSize="14" fill="#f00" fontFamily="'Liberation Sans',sans-serif">3733</text>
                            <path d="M19 25h-2v6h194v-6h-2" fill="none" stroke="#000" strokeWidth="2" />
                          </svg>
                        }
                      />
                      <RebarRow
                        name="梯板上部纵筋"
                        vals={["10", "254", "4283", "2.703", "29.733"]}
                        calc="3080*1.134+400+240"
                        fig={
                          <svg width="215" height="46" viewBox="0 0 215 46" className="block">
                            <path d="M63 25v-7l34 7h40" fill="none" stroke="#000" strokeWidth="2" />
                            <rect x="96" y="4" width="24" height="11" fill="#fff" />
                            <text x="97" y="13" fontSize="10" fill="#000" fontFamily="'Liberation Sans',sans-serif">3863</text>
                          </svg>
                        }
                      />
                    </div>
                  </div>
                </div>
              </div>
            </div>
          </div>
        </div>
      </div>

      <Annotations />
    </div>
  );
}
